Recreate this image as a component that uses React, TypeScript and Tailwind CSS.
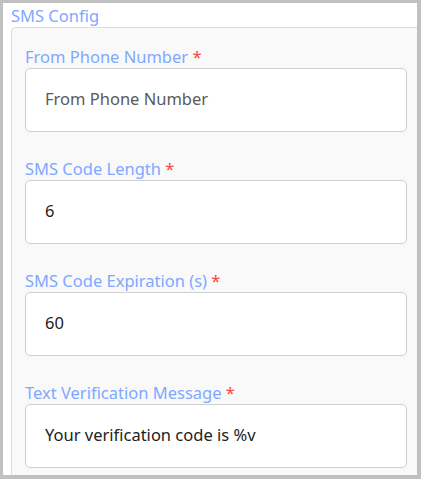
const fields = [
  { label: "From Phone Number", value: "", placeholder: "From Phone Number" },
  { label: "SMS Code Length", value: "6", placeholder: "" },
  { label: "SMS Code Expiration (s)", value: "60", placeholder: "" },
  { label: "Text Verification Message", value: "Your verification code is %v", placeholder: "" },
];

export default function App() {
  return (
    <div
      className="h-[479px] w-[421px] overflow-hidden border-t-[3px] border-l-[3px] border-r-[4px] border-b-[4px] border-[#c0c0c0] bg-white"
      style={{ fontFamily: '"Noto Sans", "Open Sans", sans-serif' }}
    >
      <div className="pl-[8px] pt-[3px] h-[24px] text-[16.5px] leading-[20px] text-[#80a8ff]">SMS Config</div>
      <div className="ml-[8px] h-full rounded-tl-[5px] border-t border-l border-[#dcdcdc] bg-[#f9f9f9] pl-[13px] pr-[10px] pt-[19px]">
        {fields.map((f) => (
          <div key={f.label} className="mb-[27px]">
            <label className="mb-[1px] block h-[20px] text-[16.5px] leading-[20px] text-[#80a8ff]">
              {f.label} <span className="text-[#f5483b]">*</span>
            </label>
            <input
              readOnly
              value={f.value}
              placeholder={f.placeholder}
              className="block h-[64px] w-full rounded-[5px] border border-[#cfcfcf] bg-white px-[19px] pb-[3px] text-[16.5px] text-[#222] outline-none placeholder:text-[#5a5a5a]"
            />
          </div>
        ))}
      </div>
    </div>
  );
}
